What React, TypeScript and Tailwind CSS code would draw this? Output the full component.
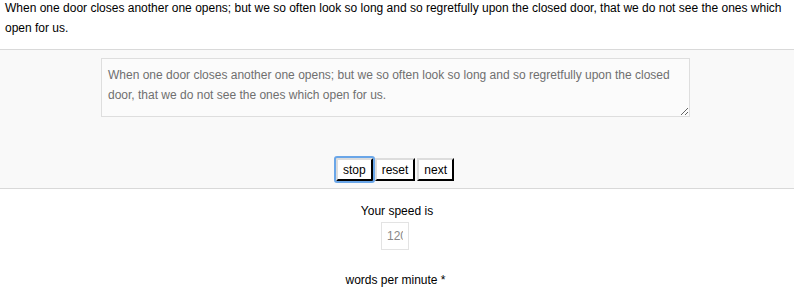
const QUOTE =
  "When one door closes another one opens; but we so often look so long and so regretfully upon the closed door, that we do not see the ones which open for us.";

const btn =
  "h-[23px] px-[5px] bg-white border-2 border-t-[#ddd] border-l-[#ddd] border-b-black border-r-black leading-none";

export default function App() {
  return (
    <div className="w-[794px] h-[297px] overflow-hidden bg-white text-[12px] text-black font-['Liberation_Sans',Arial,sans-serif]">
      <p className="px-[5px] -mt-[2px] leading-5 pb-[11px]">{QUOTE}</p>
      <div className="border-t border-b border-[#d9d9d9] bg-[#f9f9f9] h-[140px] flex flex-col items-center pt-[8px]">
        <textarea
          readOnly
          defaultValue={QUOTE}
          className="w-[589px] h-[59px] ml-[-3px] resize border border-[#dedede] bg-[#fbfbfb] text-[#6f6f6f] leading-5 pl-[6px] pr-[7px] pt-[6px] pb-[4px] outline-none"
        />
        <div className="flex gap-[2px] mt-[41px] ml-[-4px]">
          <button className={`${btn} outline outline-2 outline-[#6aa6e8] rounded-[1px]`}>
            stop
          </button>
          <button className={btn}>reset</button>
          <button className={btn}>next</button>
        </div>
      </div>
      <div className="flex flex-col items-center pt-[12px]">
        <div className="leading-5">Your speed is</div>
        <input
          readOnly
          value="120"
          className="mt-[1px] ml-[-4px] w-[28px] h-[28px] border border-[#e3e3e3] bg-white text-[#888] text-center px-[5px] outline-none"
        />
        <div className="mt-[20px] leading-5 ml-[-3px]">words per minute *</div>
      </div>
    </div>
  );
}
